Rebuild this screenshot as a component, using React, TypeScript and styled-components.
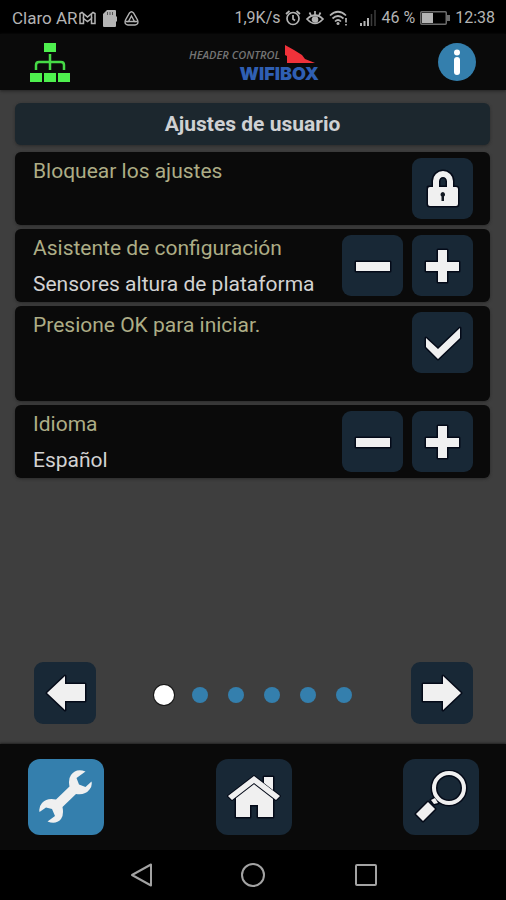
import React from "react";
import styled, { createGlobalStyle } from "styled-components";

const GlobalStyle = createGlobalStyle`
  * { box-sizing: border-box; }
  body { margin: 0; background: #3e3e3e; font-family: Roboto, "Liberation Sans", sans-serif; }
  button { font: inherit; color: inherit; border: 0; padding: 0; cursor: pointer; }
  svg { display: block; flex: none; }
  h1, h2, p { margin: 0; }
`;

const Screen = styled.div`
  min-height: 100vh;
  display: flex;
  flex-direction: column;
  background: #3e3e3e;
`;

const StatusBar = styled.div`
  height: 34px;
  padding: 2px 11px 0 12px;
  display: flex;
  align-items: center;
  justify-content: space-between;
  background: #000;
  color: #b4b4b4;
  font-size: 17px;
  line-height: 20px;
  white-space: nowrap;
`;

const StatusGroup = styled.div<{ $gap: number }>`
  display: flex;
  align-items: center;
  gap: ${(p) => p.$gap}px;
`;

const StatusInfo = styled(StatusGroup)`
  font-size: 16px;
`;

const Carrier = styled.div`
  display: flex;
  align-items: center;
  gap: 1px;
`;

const Header = styled.header`
  height: 56px;
  padding: 0 30px;
  display: flex;
  align-items: center;
  justify-content: space-between;
  background: #0a0a0a;
  box-shadow: 0 1px 3px #222;
`;

const PlainButton = styled.button`
  background: none;
  display: flex;
`;

const Logo = styled.div`
  display: flex;
  flex-direction: column;
  align-items: flex-end;
  padding-top: 4px;
`;

const LogoTop = styled.div`
  display: flex;
  align-items: center;
  gap: 5px;
  padding-right: 4px;
  color: #747474;
  font: italic 600 11px/20px "Open Sans", sans-serif;
`;

const LogoName = styled.div`
  color: #2f5fb3;
  font: 900 18px/18px Inter, sans-serif;
`;

const Main = styled.main`
  flex: 1;
  display: flex;
  flex-direction: column;
  padding: 13px 16px 0 15px;
`;

const Title = styled.h1`
  padding: 9px 12px;
  border-radius: 6px;
  background: #1c272e;
  box-shadow: 0 1px 3px #2a2a2a;
  color: #cfd1d3;
  font-size: 21px;
  font-weight: 700;
  line-height: 24px;
  text-align: center;
`;

const Settings = styled.div`
  display: flex;
  flex-direction: column;
  gap: 4px;
  margin-top: 7px;
`;

const Card = styled.section<{ $tall?: boolean }>`
  min-height: ${(p) => (p.$tall ? 95 : 73)}px;
  padding: 6px 17px 6px 18px;
  display: flex;
  align-items: flex-start;
  justify-content: space-between;
  border-radius: 6px;
  background: #0a0a0a;
  box-shadow: 0 1px 3px #2a2a2a;
`;

const CardText = styled.div`
  display: flex;
  flex-direction: column;
  gap: 12px;
  padding-top: 1px;
  font-size: 21px;
  line-height: 24px;
`;

const Label = styled.h2`
  color: #adad86;
  font-size: inherit;
  font-weight: 400;
`;

const Value = styled.p`
  color: #d2d2d2;
`;

const Actions = styled.div`
  display: flex;
  gap: 9px;
`;

const Tile = styled.button<{ $size: number; $active?: boolean }>`
  width: ${(p) => p.$size}px;
  height: ${(p) => p.$size}px;
  display: flex;
  align-items: center;
  justify-content: center;
  border-radius: ${(p) => (p.$size > 70 ? 12 : 9)}px;
  background: ${(p) => (p.$active ? "#347fad" : "#182836")};
`;

const Pager = styled.nav`
  margin-top: auto;
  padding: 0 17px 20px 19px;
  display: flex;
  align-items: center;
  justify-content: space-between;
`;

const Dots = styled.div`
  display: flex;
  align-items: center;
  padding-top: 3px;
`;

const DotButton = styled.button<{ $current?: boolean }>`
  width: 36px;
  height: 36px;
  display: flex;
  align-items: center;
  justify-content: center;
  background: none;

  &::before {
    content: "";
    width: ${(p) => (p.$current ? 20 : 16)}px;
    height: ${(p) => (p.$current ? 20 : 16)}px;
    border-radius: 50%;
    background: ${(p) => (p.$current ? "#fff" : "#347fad")};
    box-shadow: ${(p) => (p.$current ? "0 0 0 1px #161616" : "none")};
  }
`;

const Footer = styled.nav`
  height: 106px;
  padding: 0 27px 0 28px;
  display: flex;
  align-items: center;
  justify-content: space-between;
  background: #0a0a0a;
  box-shadow: 0 -1px 2px #222;
`;

const SystemBar = styled.nav`
  height: 50px;
  display: flex;
  align-items: center;
  justify-content: center;
  gap: 88px;
  background: #000;
`;

const outline = {
  fill: "#f0f0f0",
  stroke: "#040a18",
  strokeWidth: 3,
  strokeLinejoin: "round" as const,
  paintOrder: "stroke",
};

const MailIcon = () => (
  <svg width="17" height="14" viewBox="0 0 17 14" fill="none" stroke="#b4b4b4" strokeWidth="1.5">
    <path d="M1 12.5V2.5L3 1.5L8.5 6L14 1.5L16 2.5V12.5H12.5V7.5L8.5 10.5L4.5 7.5V12.5Z" />
    <path d="M4.5 3V7.5M12.5 3V7.5" />
  </svg>
);

const CardIcon = () => (
  <svg width="14" height="17" viewBox="0 0 14 17">
    <path d="M4 0H12Q13 0 13 1V6L14 7V11L13 12V16Q13 17 12 17H1Q0 17 0 16V4Z" fill="#b4b4b4" />
    <path d="M4.500 2V5M7 2V5M9.500 2V5" stroke="#555" />
  </svg>
);

const TriangleIcon = () => (
  <svg width="15" height="15" viewBox="0 0 15 15" fill="none" stroke="#b4b4b4" strokeWidth="1.400">
    <path d="M5.500 2Q7.500 -0.500 9.500 2L13.500 9Q15 13.500 11 14H4Q0 13.500 1.500 9Z" />
    <path d="M7.500 5L10.500 10.500H4.500Z" />
    <path d="M1.500 10.500H4.500M10.500 10.500H13.500" />
  </svg>
);

const AlarmIcon = () => (
  <svg width="16" height="16" viewBox="0 0 16 16" fill="none" stroke="#b4b4b4" strokeWidth="1.700">
    <circle cx="8" cy="8.500" r="6" />
    <path d="M8 5V9L10 10.500M1 4L4.500 1M15 4L11.500 1" />
  </svg>
);

const EyeIcon = () => (
  <svg width="18" height="16" viewBox="0 0 18 16" fill="none" stroke="#b4b4b4" strokeWidth="1.700">
    <path d="M1 9Q9 1.500 17 9Q9 18 1 9Z" />
    <circle cx="9" cy="9.500" r="2.500" fill="#b4b4b4" />
    <path d="M9 1V5M3.500 2.500L5 5.500M14.500 2.500L13 5.500" />
  </svg>
);

const WifiIcon = () => (
  <svg width="19" height="16" viewBox="0 0 19 16" fill="none" stroke="#b4b4b4" strokeWidth="1.700">
    <path d="M1 5.500Q9 -2 17 5.500M3.500 8.500Q9 3.500 14.500 8.500M6 11.500Q9 8.500 12 11.500" />
    <circle cx="9" cy="13.500" r="1.500" fill="#b4b4b4" stroke="none" />
    <path d="M17 8V12.500M17 14V15.500" />
  </svg>
);

const SignalIcon = () => (
  <svg width="16" height="16" viewBox="0 0 16 16" strokeWidth="2">
    <path d="M1 16V13M4.500 16V11M8 16V8" stroke="#b4b4b4" />
    <path d="M11.500 16V4M15 16V0" stroke="#3c3c3c" strokeWidth="1.500" />
  </svg>
);

const BatteryIcon = () => (
  <svg width="30" height="14" viewBox="0 0 30 14">
    <rect x="0.750" y="0.750" width="25.500" height="12.500" rx="1" fill="none" stroke="#6c6c6c" strokeWidth="1.500" />
    <rect x="2" y="2" width="11" height="10" fill="#b4b4b4" />
    <rect x="27" y="4" width="3" height="6" fill="#6c6c6c" />
  </svg>
);

const NetworkIcon = () => (
  <svg width="40" height="40" viewBox="0 0 40 40" fill="#4ef04e">
    <path d="M14 1H26V10H14ZM0 31H12V40H0ZM14 31H26V40H14ZM28 31H40V40H28Z" />
    <path d="M20 12V28M6 28V23Q6 20 9 20H31Q34 20 34 23V28" fill="none" stroke="#46da46" strokeWidth="2.500" />
  </svg>
);

const FinIcon = () => (
  <svg width="30" height="20" viewBox="0 0 30 20">
    <path d="M0 0L9 5L17 10L20 14L30 18H2V11L0 10Z" fill="#f0323a" />
  </svg>
);

const InfoIcon = () => (
  <svg width="38" height="40" viewBox="0 0 38 40">
    <circle cx="19" cy="20" r="19" fill="#347fad" />
    <circle cx="19" cy="10.500" r="3" fill="#fff" />
    <rect x="16" y="15" width="6" height="18" rx="3" fill="#fff" />
  </svg>
);

const LockIcon = () => (
  <svg width="34" height="40" viewBox="0 0 34 40">
    <path d="M2 18H7V12A10 10 0 0 1 27 12V18H30Q32 18 32 20V35Q32 37 30 37H4Q2 37 2 35V20Q2 18 4 18ZM13 18H21V12.500A4 4.500 0 0 0 13 12.500Z" {...outline} />
    <path d="M17 23A2.500 2.500 0 0 1 18 27.500V32H15.500V27.500A2.500 2.500 0 0 1 17 23Z" fill="#121821" />
  </svg>
);

const MinusIcon = () => (
  <svg width="38" height="38" viewBox="0 0 38 38">
    <path d="M2 15H36V24H2Z" {...outline} />
  </svg>
);

const PlusIcon = () => (
  <svg width="38" height="38" viewBox="0 0 38 38">
    <path d="M14 3H23V15H35V24H23V35H14V24H2V15H14Z" {...outline} />
  </svg>
);

const CheckIcon = () => (
  <svg width="38" height="38" viewBox="0 0 38 38">
    <path d="M2 14L14 25L36 4V14L14 35L2 23Z" {...outline} />
  </svg>
);

const ArrowIcon = ({ right }: { right?: boolean }) => (
  <svg width="44" height="40" viewBox="0 0 44 40">
    <path
      d={right ? "M3 11H23V3L41 20L23 37V28H3Z" : "M42 11H22V3L4 20L22 37V28H42Z"}
      {...outline}
    />
  </svg>
);

const WrenchIcon = () => (
  <svg width="56" height="56" viewBox="0 0 56 56">
    <path
      d="M47.500 2.500Q38 -1 33 6Q30 10 31.500 17.500L18 30.500Q9 28.500 4 34Q0.500 38 1.500 43L8 38.500L14 40L17 47L9.500 52.500Q18 56 23 50Q26 46 24.500 38L38 25Q47 26.500 51.500 20.500Q54.500 17 53.500 12.500L47.500 18L41 15.500L38.500 9Z"
      fill="#f0f0f0"
    />
  </svg>
);

const HomeIcon = () => (
  <svg width="54" height="50" viewBox="0 0 54 50">
    <path d="M9 25L27 10L46 25V45H31V33H23V45H9Z" {...outline} />
    <path d="M37 5H46V20L37 14Z" {...outline} />
    <path d="M27 4L53 24L49 28L27 11L5 28L1 24Z" {...outline} strokeWidth={2} />
    <path d="M37 5H46V18L37 11Z" fill="#f0f0f0" />
  </svg>
);

const SearchIcon = () => (
  <svg width="54" height="54" viewBox="0 0 54 54">
    <circle cx="35" cy="18" r="15" fill="none" stroke="#040a18" strokeWidth="7" />
    <path d="M17 30L20 34L24 33L21 28Z" {...outline} />
    <path d="M14 32L21 39L9 51L2 44Z" {...outline} />
    <circle cx="35" cy="18" r="15" fill="none" stroke="#f0f0f0" strokeWidth="4" />
  </svg>
);

const SystemIcon = ({ kind }: { kind: "back" | "home" | "recent" }) => (
  <svg width="24" height="24" viewBox="0 0 24 24" fill="none" stroke="#a3a3a3" strokeWidth="2" strokeLinejoin="round">
    {kind === "back" && <path d="M22 1.500V22.500L3 12Z" />}
    {kind === "home" && <circle cx="12" cy="12" r="11" />}
    {kind === "recent" && <rect x="3" y="2" width="20" height="20" rx="1" />}
  </svg>
);

const Stepper = ({ name }: { name: string }) => (
  <Actions>
    <Tile $size={61} aria-label={`${name}: anterior`}><MinusIcon /></Tile>
    <Tile $size={61} aria-label={`${name}: siguiente`}><PlusIcon /></Tile>
  </Actions>
);

export default function App() {
  const [page, setPage] = React.useState(0);
  const last = 5;

  return (
    <Screen>
      <GlobalStyle />
      <StatusBar>
        <StatusGroup $gap={7}>
          <Carrier><span>Claro AR</span><MailIcon /></Carrier>
          <CardIcon />
          <TriangleIcon />
        </StatusGroup>
        <StatusInfo $gap={12}>
          <StatusGroup $gap={5}>
            <span>1,9K/s</span>
            <AlarmIcon />
            <EyeIcon />
            <WifiIcon />
          </StatusGroup>
          <StatusGroup $gap={5}>
            <SignalIcon />
            <span>46 %</span>
            <BatteryIcon />
            <span>12:38</span>
          </StatusGroup>
        </StatusInfo>
      </StatusBar>

      <Header>
        <PlainButton aria-label="Red"><NetworkIcon /></PlainButton>
        <Logo>
          <LogoTop><span>HEADER CONTROL</span><FinIcon /></LogoTop>
          <LogoName>WIFIBOX</LogoName>
        </Logo>
        <PlainButton aria-label="Información"><InfoIcon /></PlainButton>
      </Header>

      <Main>
        <Title>Ajustes de usuario</Title>
        <Settings>
          <Card>
            <CardText><Label>Bloquear los ajustes</Label></CardText>
            <Actions><Tile $size={61} aria-label="Bloquear"><LockIcon /></Tile></Actions>
          </Card>
          <Card>
            <CardText>
              <Label>Asistente de configuración</Label>
              <Value>Sensores altura de plataforma</Value>
            </CardText>
            <Stepper name="Asistente" />
          </Card>
          <Card $tall>
            <CardText><Label>Presione OK para iniciar.</Label></CardText>
            <Actions><Tile $size={61} aria-label="OK"><CheckIcon /></Tile></Actions>
          </Card>
          <Card>
            <CardText>
              <Label>Idioma</Label>
              <Value>Español</Value>
            </CardText>
            <Stepper name="Idioma" />
          </Card>
        </Settings>

        <Pager aria-label="Páginas">
          <Tile $size={62} aria-label="Página anterior" onClick={() => setPage(Math.max(0, page - 1))}>
            <ArrowIcon />
          </Tile>
          <Dots>
            {Array.from({ length: last + 1 }, (_, i) => (
              <DotButton key={i} $current={i === page} aria-label={`Página ${i + 1}`} onClick={() => setPage(i)} />
            ))}
          </Dots>
          <Tile $size={62} aria-label="Página siguiente" onClick={() => setPage(Math.min(last, page + 1))}>
            <ArrowIcon right />
          </Tile>
        </Pager>
      </Main>

      <Footer aria-label="Secciones">
        <Tile $size={76} $active aria-label="Ajustes"><WrenchIcon /></Tile>
        <Tile $size={76} aria-label="Inicio"><HomeIcon /></Tile>
        <Tile $size={76} aria-label="Buscar"><SearchIcon /></Tile>
      </Footer>

      <SystemBar aria-label="Sistema">
        <PlainButton aria-label="Atrás"><SystemIcon kind="back" /></PlainButton>
        <PlainButton aria-label="Pantalla principal"><SystemIcon kind="home" /></PlainButton>
        <PlainButton aria-label="Recientes"><SystemIcon kind="recent" /></PlainButton>
      </SystemBar>
    </Screen>
  );
}
